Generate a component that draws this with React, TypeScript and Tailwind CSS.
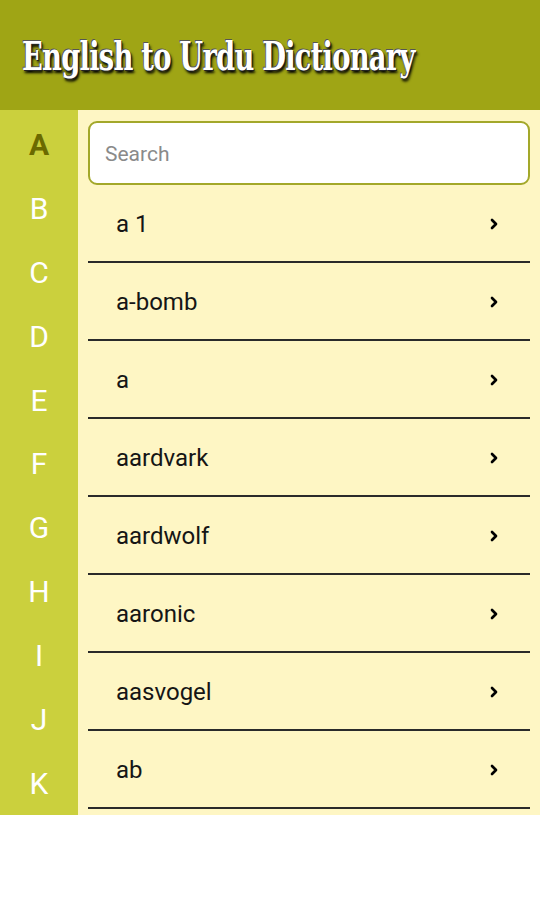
import { ChevronRight } from "lucide-react";

const LETTERS = ["A", "B", "C", "D", "E", "F", "G", "H", "I", "J", "K"];
const WORDS = ["a 1", "a-bomb", "a", "aardvark", "aardwolf", "aaronic", "aasvogel", "ab"];

export default function App() {
  return (
    <div className="h-[900px] w-[540px] bg-white font-['Roboto',sans-serif]">
      {/* Header */}
      <div className="flex h-[110px] items-center bg-[#9fa515] pl-[22px]">
        <h1 className="origin-left scale-x-[0.78] whitespace-nowrap pt-[2px] font-['DejaVu_Serif_Condensed',serif] text-[39px] font-bold tracking-[-1px] text-white [text-shadow:1px_1px_0_#222,-1px_-1px_0_#555,2px_3px_3px_#000]">
          English to Urdu Dictionary
        </h1>
      </div>

      <div className="flex h-[705px]">
        {/* Alphabet index */}
        <div className="flex w-[78px] flex-col bg-[#cbd03d] pt-[3px]">
          {LETTERS.map((l, i) => (
            <div
              key={l}
              className={`flex h-[64px] items-center justify-center text-[30px] ${
                i === 0 ? "font-bold text-[#6b6a00]" : "text-white"
              }`}
            >
              {l}
            </div>
          ))}
        </div>

        {/* Word list */}
        <div className="flex-1 overflow-hidden bg-[#fef6c4] px-[10px] pt-[11px]">
          <div className="flex h-[64px] items-center rounded-[9px] border-2 border-[#a3a82a] bg-white pl-[15px] pt-[3px] text-[21px] text-[#8a8a8a]">
            Search
          </div>
          {WORDS.map((w) => (
            <div
              key={w}
              className="flex h-[78px] items-center justify-between border-b-2 border-[#2a2a2a] pl-[28px] pr-[28px] pt-[2px] text-[24px] text-[#151515]"
            >
              <span>{w}</span>
              <ChevronRight className="h-[16px] w-[16px] text-black" strokeWidth={4} />
            </div>
          ))}
        </div>
      </div>
    </div>
  );
}
